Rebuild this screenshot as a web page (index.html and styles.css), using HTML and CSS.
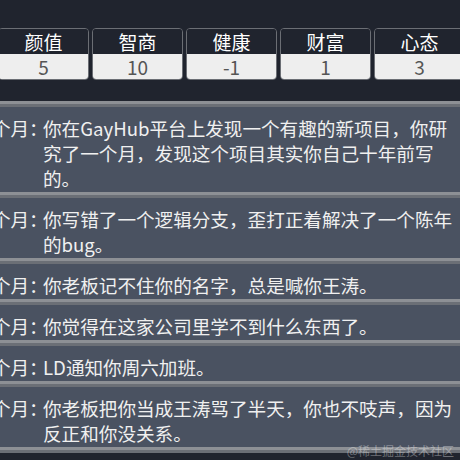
FILE: index.html
```html
<!DOCTYPE html>
<html lang="zh-CN">
<head>
<meta charset="utf-8">
<title>人生重开</title>
<link rel="stylesheet" href="styles.css">
</head>
<body>
<div class="page">
  <div class="stats">
    <div class="stat"><div class="stat-label">颜值</div><div class="stat-value">5</div></div>
    <div class="stat"><div class="stat-label">智商</div><div class="stat-value">10</div></div>
    <div class="stat"><div class="stat-label">健康</div><div class="stat-value">-1</div></div>
    <div class="stat"><div class="stat-label">财富</div><div class="stat-value">1</div></div>
    <div class="stat"><div class="stat-label">心态</div><div class="stat-value">3</div></div>
  </div>
  <div class="events">
    <div class="event"><span class="event-month">第1个月：</span><span class="event-text">你在GayHub平台上发现一个有趣的新项目，你研究了一个月，发现这个项目其实你自己十年前写的。</span></div>
    <div class="event"><span class="event-month">第2个月：</span><span class="event-text">你写错了一个逻辑分支，歪打正着解决了一个陈年的bug。</span></div>
    <div class="event"><span class="event-month">第3个月：</span><span class="event-text">你老板记不住你的名字，总是喊你王涛。</span></div>
    <div class="event"><span class="event-month">第4个月：</span><span class="event-text">你觉得在这家公司里学不到什么东西了。</span></div>
    <div class="event"><span class="event-month">第5个月：</span><span class="event-text">LD通知你周六加班。</span></div>
    <div class="event"><span class="event-month">第6个月：</span><span class="event-text">你老板把你当成王涛骂了半天，你也不吱声，因为反正和你没关系。</span></div>
  </div>
  <span class="watermark">@稀土掘金技术社区</span>
</div>
</body>
</html>
```

FILE: styles.css
```css
html, body {
  margin: 0;
  padding: 0;
}
body {
  background: #20242e;
  width: 460px;
  height: 460px;
  overflow: hidden;
  font-family: "Noto Sans CJK SC", "Noto Sans", sans-serif;
  color: #f0f0f0;
}
.page {
  position: relative;
  width: 460px;
  height: 460px;
  overflow: hidden;
}
.stats {
  display: flex;
  gap: 3px;
  width: 467px;
  margin: 28px 0 0 -2px;
}
.stat {
  flex: none;
  width: 89px;
  border: 1px solid #6b6e74;
  border-radius: 4px;
  overflow: hidden;
}
.stat-label {
  height: 25px;
  line-height: 25px;
  text-align: center;
  font-size: 19px;
  color: #ffffff;
  background: #20242e;
}
.stat-value {
  height: 25px;
  line-height: 25px;
  text-align: center;
  font-size: 19px;
  color: #555555;
  background: #eeeeee;
}
.events {
  margin-top: 21px;
  background: #4a5261;
}
.event {
  display: flex;
  border-top: 3px solid #8d9095;
  box-shadow: inset 0 3px 0 #6b6f76;
  padding: 11px 0 2px;
  font-size: 18.6px;
  line-height: 25px;
}
.events::after {
  content: "";
  display: block;
  height: 3px;
  border-top: 3px solid #8d9095;
  background: #6b6f76;
}
.event-month {
  flex: none;
  width: 80px;
  margin-left: -37px;
  text-align: right;
  white-space: nowrap;
}
.event-text {
  flex: none;
  width: 422px;
}
.watermark {
  position: absolute;
  right: 6px;
  top: 443px;
  font-size: 12px;
  line-height: 16px;
  color: rgba(255, 255, 255, 0.35);
}
```
